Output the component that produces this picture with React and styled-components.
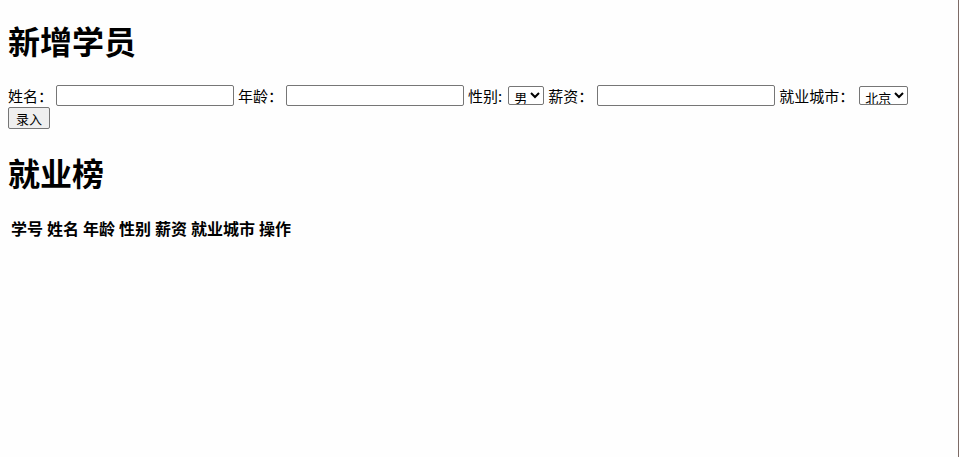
import React from 'react';
import styled, { createGlobalStyle } from 'styled-components';

const Global = createGlobalStyle`
  html {
    background: #fefefe;
    box-shadow: inset -1px 0 #7d6b66;
    min-height: 100%;
  }
  body {
    margin: 8px;
    font-family: "Noto Sans CJK SC", "Liberation Sans", sans-serif;
    font-size: 16px;
    line-height: 1.32;
    color: #000;
  }
`;

const Heading = styled.h1`
  font-size: 32px;
  font-weight: 700;
  line-height: 42px;
  margin: ${p => p.$top}px 0 ${p => p.$bottom}px;
`;

const Form = styled.div`
  line-height: 21px;
`;

const Label = styled.span`
  font-size: 15px;
`;

const TextInput = styled.input`
  box-sizing: border-box;
  width: 178px;
  height: 21px;
  border: 1px solid #767676;
  border-radius: 2px;
  padding: 1px 2px;
  margin: 0 4px 0 ${p => p.$ml || 3}px;
  vertical-align: top;
  font: 13px "Liberation Sans", sans-serif;
`;

const Select = styled.select`
  box-sizing: border-box;
  width: ${p => p.$w}px;
  height: 19px;
  border: 1px solid #767676;
  border-radius: 2px;
  padding: 0 0 0 1px;
  margin: 1px 4px 0 ${p => p.$ml}px;
  vertical-align: top;
  font-family: "Noto Sans CJK SC", sans-serif;
  font-size: 13px;
  line-height: normal;
  background: #fff;
  color: #000;
`;

const Button = styled.button`
  display: block;
  box-sizing: border-box;
  width: 42px;
  height: 22px;
  margin-top: 1px;
  padding: 0;
  border: 1px solid #767676;
  border-radius: 2px;
  background: #efefef;
  font: 13px "Noto Sans CJK SC", sans-serif;
  color: #000;
`;

const Table = styled.table`
  border-spacing: 2px;
  th {
    padding: 1px;
    font-size: 16px;
    font-weight: 700;
  }
`;

export default function App() {
  return (
    <>
      <Global />
      <Heading $top={11} $bottom={24}>新增学员</Heading>
      <Form>
        <Label>姓名：</Label>
        <TextInput type="text" />
        <Label>年龄：</Label>
        <TextInput type="text" />
        <Label>性别:</Label>
        <Select $w={36} $ml={6}>
          <option>男</option>
          <option>女</option>
        </Select>
        <Label>薪资：</Label>
        <TextInput type="text" $ml={4} />
        <Label>就业城市：</Label>
        <Select $w={49} $ml={5}>
          <option>北京</option>
          <option>上海</option>
        </Select>
        <Button>录入</Button>
      </Form>
      <Heading as="h2" $top={22} $bottom={22}>就业榜</Heading>
      <Table>
        <thead>
          <tr>
            <th>学号</th>
            <th>姓名</th>
            <th>年龄</th>
            <th>性别</th>
            <th>薪资</th>
            <th>就业城市</th>
            <th>操作</th>
          </tr>
        </thead>
        <tbody></tbody>
      </Table>
    </>
  );
}
